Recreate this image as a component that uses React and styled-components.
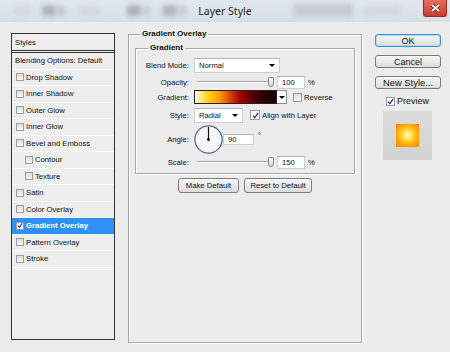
import React from "react";
import styled, { createGlobalStyle } from "styled-components";

const GlobalStyle = createGlobalStyle`
  html, body {
    margin: 0;
    padding: 0;
    background: #ececec;
  }
`;

const Window = styled.div`
  width: 450px;
  height: 352px;
  overflow: hidden;
  display: flex;
  flex-direction: column;
  background: #ececec;
  font-family: "Liberation Sans", Arial, sans-serif;
  color: #111;
`;

const TitleBar = styled.div`
  position: relative;
  flex: none;
  height: 22px;
  display: flex;
  align-items: flex-start;
  background: linear-gradient(#e1e8ee, #d8e0e7);
`;

const Blob = styled.span`
  flex: none;
  width: ${(p) => p.$w}px;
  height: ${(p) => p.$h || 10}px;
  margin: ${(p) => p.$top || 6}px 0 0 ${(p) => p.$ml}px;
  background: ${(p) => p.$c};
  border-radius: 2px;
  filter: blur(2.4px);
`;

const Title = styled.div`
  position: absolute;
  left: 0;
  right: 0;
  top: 4px;
  text-align: center;
  font-family: "Noto Sans", sans-serif;
  font-size: 10.5px;
  line-height: 14px;
  color: #1e1e1e;
`;

const CloseButton = styled.div`
  flex: none;
  margin: 0 3px 0 auto;
  width: 24px;
  height: 17px;
  box-sizing: border-box;
  display: flex;
  align-items: center;
  justify-content: center;
  background: linear-gradient(#e56d61, #c63a2e);
  border: 1px solid #9c2a20;
  border-top: none;
  border-radius: 0 0 3px 3px;
`;

const Body = styled.div`
  flex: 1;
  display: flex;
  align-items: flex-start;
`;

/* left styles list */
const StylesPanel = styled.div`
  margin: 11px 0 0 11px;
  width: 104px;
  height: 307px;
  box-sizing: border-box;
  border: 1px solid #333;
  background: #eeeeee;
  display: flex;
  flex-direction: column;
  font-size: 7.7px;
`;

const PanelHeader = styled.div`
  height: 16px;
  padding-left: 3px;
  display: flex;
  align-items: center;
  border-bottom: 3px double #333;
`;

const StyleRow = styled.div`
  height: 16.5px;
  box-sizing: border-box;
  display: flex;
  align-items: center;
  padding-left: ${(p) => (p.$plain ? 3 : p.$indent ? 13 : 4)}px;
  border-bottom: 1px solid #f9f9f9;
  background: ${(p) => (p.$active ? "#2f90f5" : "transparent")};
  color: ${(p) => (p.$active ? "#fff" : "#111")};
  font-weight: ${(p) => (p.$active ? "bold" : "normal")};
`;

const Box = styled.span`
  flex: none;
  width: ${(p) => p.$size || 8}px;
  height: ${(p) => p.$size || 8}px;
  box-sizing: border-box;
  margin-right: ${(p) => p.$gap ?? 2}px;
  border: 1px solid #9c9c9c;
  background: ${(p) =>
    p.$checked ? "#ffffff" : "linear-gradient(#dedede, #f8f8f8)"};
  display: flex;
  align-items: center;
  justify-content: center;
`;

const Check = ({ checked, size, gap }) => (
  <Box $checked={checked} $size={size} $gap={gap}>
    {checked && (
      <svg width="7" height="7" viewBox="0 0 7 7">
        <path
          d="M1 3.6 L2.8 5.6 L6.2 0.8"
          fill="none"
          stroke="#24398f"
          strokeWidth="1.3"
        />
      </svg>
    )}
  </Box>
);

/* group boxes */
const Group = styled.fieldset`
  margin: ${(p) => p.$mt}px 0 0 ${(p) => p.$ml || 0}px;
  padding: ${(p) => p.$pad};
  width: ${(p) => p.$w}px;
  height: ${(p) => (p.$h ? `${p.$h}px` : "auto")};
  min-width: 0;
  box-sizing: border-box;
  border: 1px solid #a6a6a6;
  box-shadow: inset 1px 1px 0 #fff, 1px 1px 0 #fff;
`;

const Legend = styled.legend`
  margin-left: ${(p) => p.$ml}px;
  padding: 0 2px;
  background: #ececec;
  font-size: 8px;
  line-height: 10px;
  font-weight: bold;
`;

const Row = styled.div`
  display: flex;
  align-items: center;
  height: ${(p) => p.$h}px;
  margin-top: ${(p) => p.$mt || 0}px;
  font-size: 7.7px;
`;

const Label = styled.span`
  flex: none;
  width: 49px;
  margin-right: 5px;
  text-align: right;
`;

const Select = styled.div`
  flex: none;
  width: ${(p) => p.$w}px;
  height: 15px;
  box-sizing: border-box;
  padding: 0 4px;
  display: flex;
  align-items: center;
  justify-content: space-between;
  background: #fff;
  border: 1px solid #d0d0d0;
  border-top-color: #b4b4b4;
`;

const Arrow = styled.span`
  width: 0;
  height: 0;
  border-left: 3px solid transparent;
  border-right: 3px solid transparent;
  border-top: 3px solid #000;
`;

const Slider = styled.div`
  flex: none;
  width: 80px;
  padding-left: 3px;
  box-sizing: border-box;
  display: flex;
  align-items: center;
`;

const Track = styled.span`
  flex: 1;
  height: 0;
  border-top: 1px solid #a3a3a3;
  border-bottom: 1px solid #fff;
`;

const Thumb = styled.span`
  flex: none;
  width: 6px;
  height: 10px;
  box-sizing: border-box;
  border: 1px solid #8a8a8a;
  border-radius: 1px 1px 3px 3px;
  background: linear-gradient(#fafafa, #d4d4d4);
`;

const NumBox = styled.div`
  flex: none;
  width: ${(p) => p.$w || 28}px;
  height: ${(p) => p.$h || 13}px;
  margin-left: ${(p) => p.$ml ?? 3}px;
  box-sizing: border-box;
  padding-left: 4px;
  display: flex;
  align-items: center;
  background: #fff;
  border: 1px solid #d0d0d0;
  border-top-color: #b4b4b4;
`;

const Unit = styled.span`
  margin-left: ${(p) => p.$ml || 3}px;
  align-self: ${(p) => (p.$top ? "flex-start" : "center")};
  margin-top: ${(p) => (p.$top ? 6 : 0)}px;
`;

const Swatch = styled.div`
  flex: none;
  width: 83px;
  height: 14px;
  box-sizing: border-box;
  border: 1px solid #222;
  background: linear-gradient(
    to right,
    #fffbe8 0%,
    #ffd21a 16%,
    #ff9a00 30%,
    #e04a00 42%,
    #a80000 55%,
    #5a0000 70%,
    #2a0000 85%,
    #1c0000 100%
  );
`;

const SwatchDrop = styled.div`
  flex: none;
  width: 10px;
  height: 14px;
  box-sizing: border-box;
  border: 1px solid #8c8c8c;
  border-left: none;
  background: #fff;
  display: flex;
  align-items: center;
  justify-content: center;
`;

const Dial = () => (
  <svg width="29" height="29" viewBox="0 0 29 29" style={{ flex: "none" }}>
    <circle cx="14.5" cy="14.5" r="13.6" fill="#f6f6f6" stroke="#5a6892" strokeWidth="1.3" />
    <line x1="14.5" y1="14.5" x2="14.5" y2="2" stroke="#111" strokeWidth="1.2" />
    <circle cx="14.5" cy="14.5" r="1.4" fill="#000" />
  </svg>
);

const ButtonRow = styled.div`
  display: flex;
  justify-content: center;
  gap: 5px;
  margin-top: 4px;
`;

const Button = styled.div`
  width: ${(p) => p.$w}px;
  height: ${(p) => p.$h || 15}px;
  box-sizing: border-box;
  display: flex;
  align-items: center;
  justify-content: center;
  font-size: ${(p) => p.$fs || 7.7}px;
  border: 1px solid ${(p) => (p.$primary ? "#3c93d0" : "#7c7c7c")};
  border-radius: 3px;
  background: linear-gradient(#f6f6f6, #dddddd);
  box-shadow: ${(p) =>
    p.$primary ? "inset 0 0 0 1px #a9dcf6" : "inset 0 1px 0 #fff"};
  margin-bottom: ${(p) => p.$mb || 0}px;
`;

/* right column */
const SideColumn = styled.div`
  margin: 12px 0 0 13px;
  width: 66px;
  display: flex;
  flex-direction: column;
  font-size: 9px;
`;

const PreviewRow = styled.div`
  height: 10px;
  margin-top: 7px;
  padding-left: 11px;
  display: flex;
  align-items: center;
`;

const PreviewBox = styled.div`
  margin: 5px 0 0 8px;
  width: 49px;
  height: 49px;
  display: flex;
  align-items: center;
  justify-content: center;
  background: linear-gradient(#dcdcdc, #d2d2d2);
`;

const PreviewSwatch = styled.div`
  width: 23px;
  height: 23px;
  background: radial-gradient(
    circle at 50% 48%,
    #fffbe4 0%,
    #ffe75a 22%,
    #ffbd12 50%,
    #ff9300 80%,
    #ff8400 100%
  );
`;

const blobs = [
  { ml: 13, w: 17, c: "#d2d8dd" },
  { ml: 12, w: 14, c: "#aeb4b9", h: 11, top: 5 },
  { ml: 2, w: 7, c: "#c0c5ca" },
  { ml: 15, w: 20, c: "#d2d8dd" },
  { ml: 27, w: 14, c: "#acb1b6", h: 11, top: 5 },
  { ml: 3, w: 5, c: "#bec3c8" },
  { ml: 14, w: 14, c: "#b0b5ba", h: 11, top: 5 },
  { ml: 3, w: 6, c: "#c0c5ca" },
  { ml: 107, w: 60, c: "#c6ccd1", h: 13, top: 4 },
  { ml: 10, w: 37, c: "#d3d9de" },
];

const styleItems = [
  { label: "Drop Shadow" },
  { label: "Inner Shadow" },
  { label: "Outer Glow" },
  { label: "Inner Glow" },
  { label: "Bevel and Emboss" },
  { label: "Contour", indent: true },
  { label: "Texture", indent: true },
  { label: "Satin" },
  { label: "Color Overlay" },
  { label: "Gradient Overlay", checked: true, active: true },
  { label: "Pattern Overlay" },
  { label: "Stroke" },
];

export default function App() {
  return (
    <Window>
      <GlobalStyle />
      <TitleBar>
        {blobs.map((b, i) => (
          <Blob key={i} $ml={b.ml} $w={b.w} $c={b.c} $h={b.h} $top={b.top} />
        ))}
        <Title>Layer Style</Title>
        <CloseButton>
          <svg width="9" height="8" viewBox="0 0 9 8">
            <path d="M1 1 L8 7 M8 1 L1 7" stroke="#5a1510" strokeWidth="3" />
            <path d="M1 1 L8 7 M8 1 L1 7" stroke="#fff" strokeWidth="1.7" />
          </svg>
        </CloseButton>
      </TitleBar>

      <Body>
        <StylesPanel>
          <PanelHeader>Styles</PanelHeader>
          <StyleRow $plain>Blending Options: Default</StyleRow>
          {styleItems.map((s) => (
            <StyleRow key={s.label} $indent={s.indent} $active={s.active}>
              <Check checked={s.checked} />
              {s.label}
            </StyleRow>
          ))}
        </StylesPanel>

        <Group $mt={7} $ml={13} $w={234} $h={314} $pad="0 6px">
          <Legend $ml={5}>Gradient Overlay</Legend>
          <Group $mt={4} $w={220} $pad="4px 4px 4px">
            <Legend $ml={8}>Gradient</Legend>
            <Row $h={16}>
              <Label>Blend Mode:</Label>
              <Select $w={86}>
                Normal
                <Arrow />
              </Select>
            </Row>
            <Row $h={14} $mt={2}>
              <Label>Opacity:</Label>
              <Slider>
                <Track />
                <Thumb />
              </Slider>
              <NumBox>100</NumBox>
              <Unit>%</Unit>
            </Row>
            <Row $h={14} $mt={1}>
              <Label>Gradient:</Label>
              <Swatch />
              <SwatchDrop>
                <Arrow />
              </SwatchDrop>
              <span style={{ width: 6 }} />
              <Check size={9} />
              Reverse
            </Row>
            <Row $h={16} $mt={3}>
              <Label>Style:</Label>
              <Select $w={49}>
                Radial
                <Arrow />
              </Select>
              <span style={{ width: 7 }} />
              <Check checked size={10} />
              Align with Layer
            </Row>
            <Row $h={29} $mt={2}>
              <Label>Angle:</Label>
              <Dial />
              <NumBox $w={31} $h={11} $ml={0}>
                90
              </NumBox>
              <Unit $ml={4} $top>
                °
              </Unit>
            </Row>
            <Row $h={14} $mt={1}>
              <Label>Scale:</Label>
              <Slider>
                <Track />
                <Thumb />
              </Slider>
              <NumBox>150</NumBox>
              <Unit>%</Unit>
            </Row>
          </Group>
          <ButtonRow>
            <Button $w={61}>Make Default</Button>
            <Button $w={68}>Reset to Default</Button>
          </ButtonRow>
        </Group>

        <SideColumn>
          <Button $w={66} $h={13} $fs={9} $primary $mb={8}>
            OK
          </Button>
          <Button $w={66} $h={13} $fs={9} $mb={8}>
            Cancel
          </Button>
          <Button $w={66} $h={13} $fs={9.4}>
            New Style...
          </Button>
          <PreviewRow>
            <Check checked size={9} />
            Preview
          </PreviewRow>
          <PreviewBox>
            <PreviewSwatch />
          </PreviewBox>
        </SideColumn>
      </Body>
    </Window>
  );
}
